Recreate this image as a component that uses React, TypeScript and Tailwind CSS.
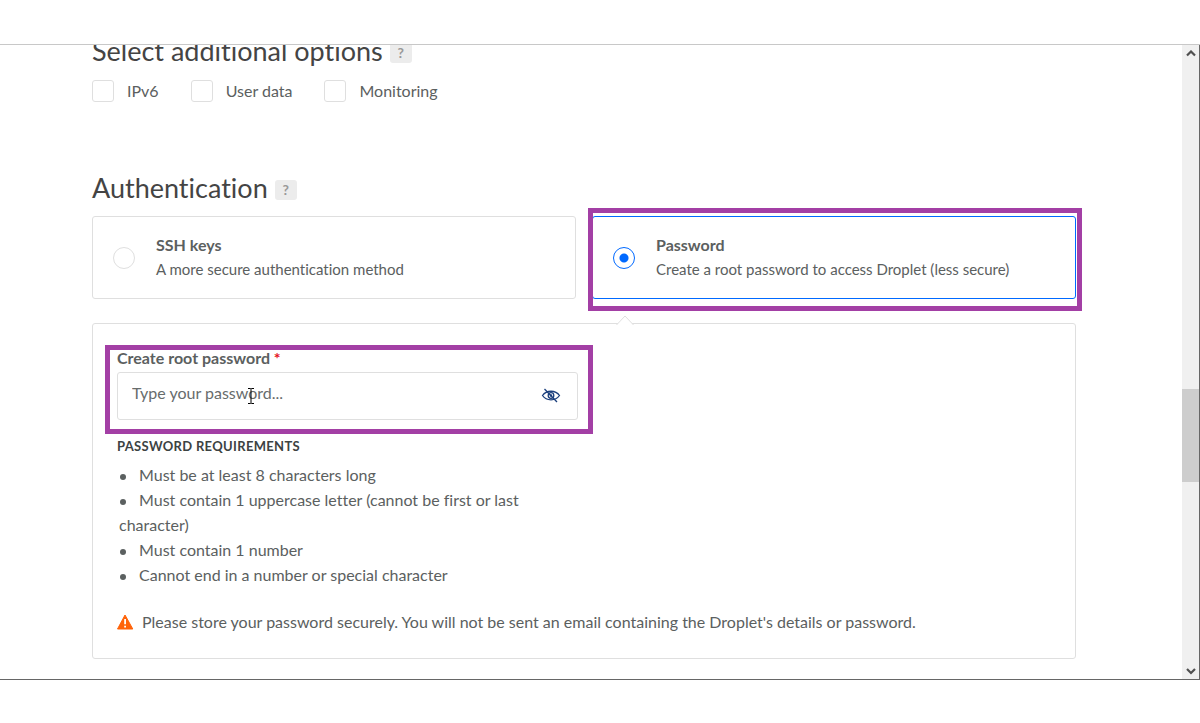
import React from "react";

const extraOptions = ["IPv6", "User data", "Monitoring"];

const requirements = [
  "Must be at least 8 characters long",
  "Must contain 1 uppercase letter (cannot be first or last character)",
  "Must contain 1 number",
  "Cannot end in a number or special character",
];

function HelpButton({ label }: { label: string }) {
  return (
    <button
      type="button"
      aria-label={label}
      className="mt-1 flex h-5 w-[22px] items-center justify-center rounded-[3px] bg-[#ececec] text-sm font-bold text-[#999]"
    >
      ?
    </button>
  );
}

function SectionTitle({ children }: { children: string }) {
  return (
    <div className="flex items-center gap-[7px]">
      <h2 className="text-[27px] leading-8 text-[#444]">{children}</h2>
      <HelpButton label={"Help: " + children} />
    </div>
  );
}

function AuthCard({
  title,
  text,
  checked,
  highlighted,
}: {
  title: string;
  text: string;
  checked?: boolean;
  highlighted?: boolean;
}) {
  return (
    <label
      className={
        checked
          ? "relative flex items-center gap-[21px] rounded-[3px] border border-[#0069ff] px-5 py-4"
          : "relative flex items-center gap-[21px] rounded-[3px] border border-[#dfdfdf] px-5 py-4"
      }
    >
      <input
        type="radio"
        name="auth"
        defaultChecked={checked}
        className="size-[22px] shrink-0 appearance-none rounded-full border border-[#dfdfdf] bg-white checked:border-[#0069ff] checked:bg-[radial-gradient(circle,#0069ff_4px,#fff_5px)]"
      />
      <span className="flex flex-col pb-px">
        <span className="text-base leading-6 font-bold">{title}</span>
        <span className="text-[15px] leading-6">{text}</span>
      </span>
      {highlighted && (
        <span className="pointer-events-none absolute -top-[9px] -right-[7px] -bottom-[13px] -left-[5px] border-5 border-[#a33fa5]" />
      )}
    </label>
  );
}

function EyeOff() {
  return (
    <svg viewBox="0 0 20 16" className="h-4 w-5" fill="none" stroke="#1b3f7d" strokeWidth="1.3">
      <path d="M1.5 7.5C5.5 1.8 14.5 1.8 18.5 7.5C14.5 13.2 5.5 13.2 1.5 7.5Z" />
      <circle cx="10" cy="7.5" r="2.8" />
      <circle cx="10" cy="7.5" r="0.6" />
      <path d="M3.5 1L16 14" />
    </svg>
  );
}

function Warning() {
  return (
    <svg viewBox="0 0 17 16" className="h-4 w-[17px] shrink-0" aria-hidden="true">
      <path d="M8 1L15.8 15H0.5Z" fill="#ff6309" stroke="#ff6309" strokeLinejoin="round" />
      <path d="M8.1 5V10.2M8.1 11.8V13.6" stroke="#fff" strokeWidth="1.8" />
    </svg>
  );
}

function Chevron({ down }: { down?: boolean }) {
  return (
    <svg viewBox="0 0 10 8" className="h-2 w-2.5" fill="none" stroke="#505050" strokeWidth="2.2">
      <path d={down ? "M1 2L5 6L9 2" : "M1 5.5L5 1.5L9 5.5"} />
    </svg>
  );
}

function ScrollBar() {
  return (
    <div className="flex w-[18px] shrink-0 flex-col border-r border-[#666] bg-[#f0f0f0]">
      <button type="button" aria-label="Scroll up" className="flex h-[17px] items-center justify-center">
        <Chevron />
      </button>
      <div className="flex flex-1 flex-col">
        <div className="flex-[327]" />
        <div className="flex-[93] bg-[#cdcdcd]" />
        <div className="flex-[180]" />
      </div>
      <button type="button" aria-label="Scroll down" className="flex h-[17px] items-center justify-center">
        <Chevron down />
      </button>
    </div>
  );
}

export default function App() {
  return (
    <div className="min-h-screen bg-white py-11 font-['Lato',sans-serif] text-base text-[#5b6060] [font-variant-ligatures:none]">
      <div className="flex overflow-hidden border-t border-b border-t-[#c8c8c8] border-b-[#666]">
        <main className="min-w-0 flex-1 pr-[106px] pb-5 pl-[92px]">
          <section className="-mt-[10px]">
            <SectionTitle>Select additional options</SectionTitle>
            <div className="mt-[13px] flex gap-8">
              {extraOptions.map((name) => (
                <label key={name} className="flex items-center gap-[13px] leading-[22px]">
                  <input
                    type="checkbox"
                    className="size-[22px] appearance-none rounded-[3px] border border-[#dfdfdf] bg-white checked:bg-[#0069ff]"
                  />
                  {name}
                </label>
              ))}
            </div>
          </section>

          <section className="mt-[70px]">
            <SectionTitle>Authentication</SectionTitle>
            <div className="mt-3 grid grid-cols-2 gap-4">
              <AuthCard title="SSH keys" text="A more secure authentication method" />
              <AuthCard
                title="Password"
                text="Create a root password to access Droplet (less secure)"
                checked
                highlighted
              />
            </div>

            <div className="relative mt-6 rounded-[3px] border border-[#dfdfdf] px-6 pt-[22px] pb-6">
              <svg
                viewBox="0 0 18 10"
                className="absolute -top-[9px] left-[calc(50%+32px)] h-[10px] w-[18px]"
                fill="#fff"
                stroke="#dfdfdf"
                aria-hidden="true"
              >
                <path d="M0.5 10L9 1L17.5 10" />
              </svg>
              <div className="grid grid-cols-2 gap-3">
                <div>
                  <div className="relative">
                    <label htmlFor="root-password" className="block pb-[2px] leading-6 font-bold">
                      Create root password <span className="text-[#e5121d]">*</span>
                    </label>
                    <div className="flex h-12 items-center rounded-[3px] border border-[#dfdfdf] pr-4 pl-[14px]">
                      <input
                        id="root-password"
                        type="password"
                        placeholder="Type your password..."
                        className="h-full min-w-0 flex-1 bg-transparent pb-2 outline-none placeholder:text-[#676c6c]"
                      />
                      <button type="button" aria-label="Show password">
                        <EyeOff />
                      </button>
                    </div>
                    <svg
                      viewBox="0 0 8 16"
                      className="absolute top-[42px] left-[130px] h-4 w-2"
                      fill="none"
                      stroke="#000"
                      aria-hidden="true"
                    >
                      <path d="M1 0.5H3.5L4 1L4.5 0.5H7M4 1V15M1 15.5H3.5L4 15L4.5 15.5H7" />
                    </svg>
                    <div className="pointer-events-none absolute -top-[1px] -right-[15px] -bottom-[14px] -left-3 border-5 border-[#a33fa5]" />
                  </div>

                  <h3 className="mt-4 text-[13px] leading-5 font-bold tracking-wide text-[#3c4242] uppercase">
                    Password requirements
                  </h3>
                  <ul className="mt-[6px] pl-[2px] leading-[25px]">
                    {requirements.map((item) => (
                      <li key={item}>
                        <span className="mr-[13px] ml-px inline-block size-[6px] rounded-full bg-[#5b6060] align-middle" />
                        {item}
                      </li>
                    ))}
                  </ul>
                </div>
              </div>
              <p className="mt-[23px] flex items-center gap-2 leading-6">
                <Warning />
                Please store your password securely. You will not be sent an email containing the
                Droplet's details or password.
              </p>
            </div>
          </section>
        </main>
        <ScrollBar />
      </div>
    </div>
  );
}
